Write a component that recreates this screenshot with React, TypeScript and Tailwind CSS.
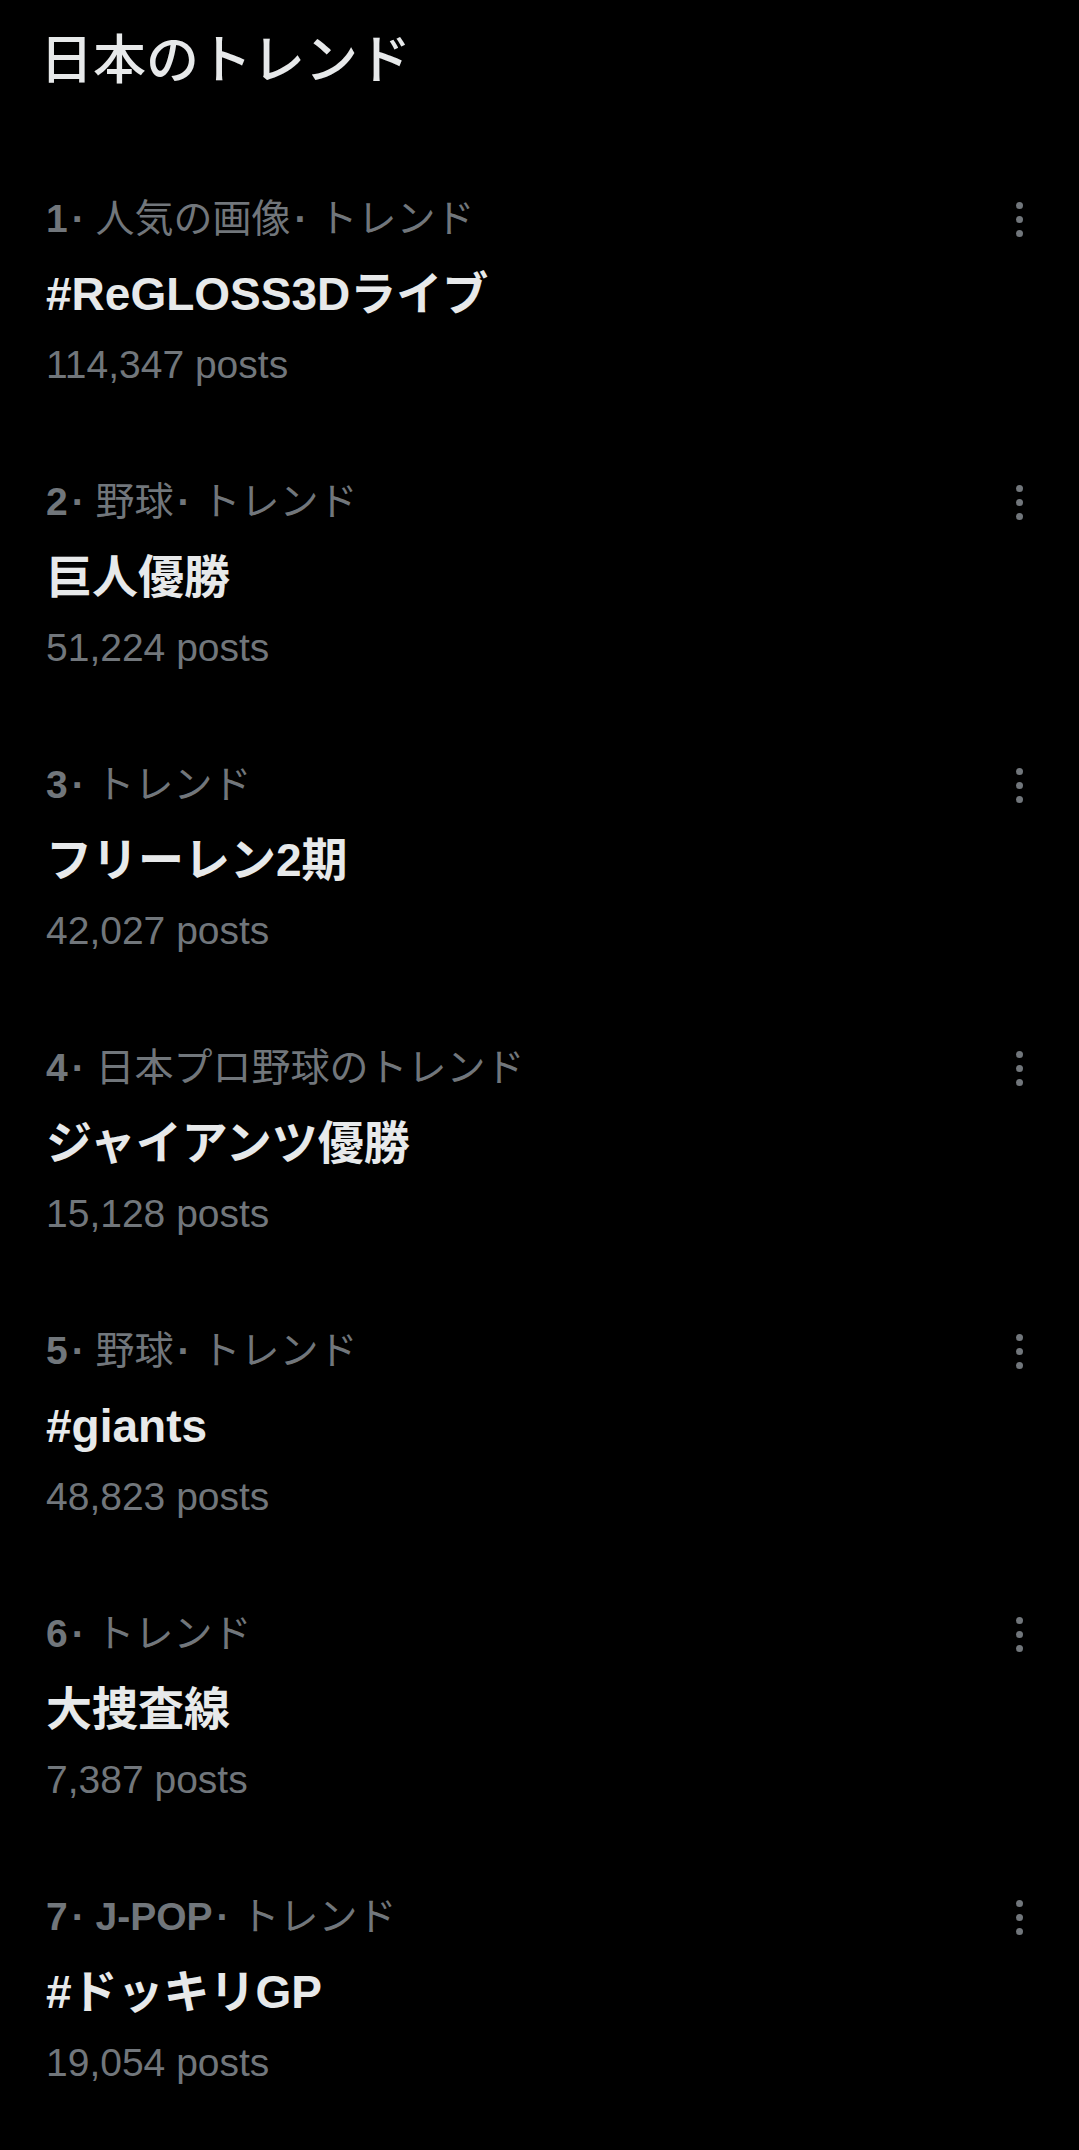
const trends = [
  { rank: 1, parts: ["人気の画像", "トレンド"], title: "#ReGLOSS3Dライブ", posts: "114,347" },
  { rank: 2, parts: ["野球", "トレンド"], title: "巨人優勝", posts: "51,224" },
  { rank: 3, parts: ["トレンド"], title: "フリーレン2期", posts: "42,027" },
  { rank: 4, parts: ["日本プロ野球のトレンド"], title: "ジャイアンツ優勝", posts: "15,128" },
  { rank: 5, parts: ["野球", "トレンド"], title: "#giants", posts: "48,823" },
  { rank: 6, parts: ["トレンド"], title: "大捜査線", posts: "7,387" },
  { rank: 7, parts: ["J-POP", "トレンド"], title: "#ドッキリGP", posts: "19,054" },
];

function MoreDots() {
  return (
    <button aria-label="More" className="flex flex-col gap-[7px] p-0">
      <span className="w-[7px] h-[7px] rounded-full bg-[#71767b]" />
      <span className="w-[7px] h-[7px] rounded-full bg-[#71767b]" />
      <span className="w-[7px] h-[7px] rounded-full bg-[#71767b]" />
    </button>
  );
}

function TrendItem({ rank, parts, title, posts }: (typeof trends)[number]) {
  return (
    <div className="pl-[46px] pr-[56px] pt-8 pb-[31px]">
      <div className="flex items-center justify-between h-[78px]">
        <div className="text-[39px] leading-[78px] text-[#71767b] whitespace-nowrap">
          <span className="font-bold">{rank}</span>
          {parts.map((p) => (
            <span key={p}>
              <span className="ml-[4px] font-bold">· </span>
              <span className={/^[A-Za-z-]+$/.test(p) ? "font-bold" : ""}>{p}</span>
            </span>
          ))}
        </div>
        <MoreDots />
      </div>
      <div className="text-[46px] leading-[72px] font-bold text-[#e7e9ea]">{title}</div>
      <div className="text-[39px] leading-[70px] text-[#71767b]">{posts} posts</div>
    </div>
  );
}

export default function App() {
  return (
    <div className="min-h-screen bg-black font-['Liberation_Sans','Noto_Sans_CJK_JP',sans-serif]">
      <header className="pl-[40px] pt-[31px] pb-[57px]">
        <h1 className="text-[53px] leading-[60px] font-medium text-[#e7e9ea]">日本のトレンド</h1>
      </header>
      <main>
        {trends.map((t) => (
          <TrendItem key={t.rank} {...t} />
        ))}
      </main>
    </div>
  );
}
